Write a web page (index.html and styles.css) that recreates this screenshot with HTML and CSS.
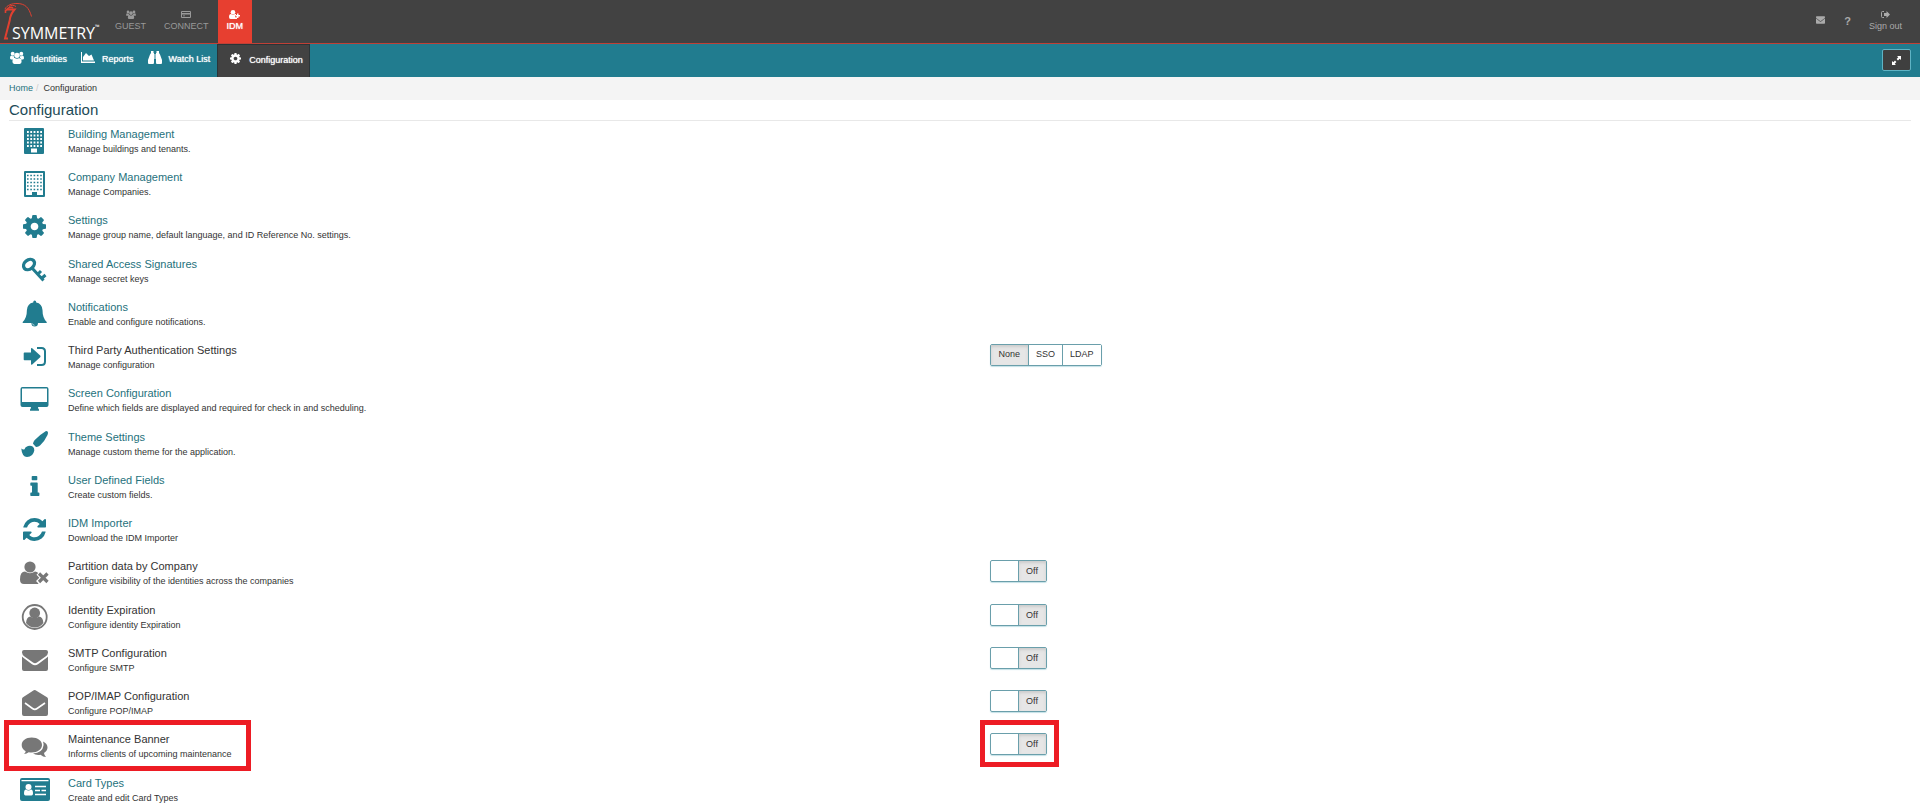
FILE: index.html
```html
<!DOCTYPE html>
<html lang="en">
<head>
  <meta charset="UTF-8">
  <meta name="viewport" content="width=device-width, initial-scale=1.0">
  <title>Configuration</title>
  <link rel="stylesheet" href="styles.css">
</head>
<body>
  <svg class="sprite" aria-hidden="true">
    <symbol id="cog" viewBox="128 128 1536 1536">
      <path d="M1152 896q0-106-75-181t-181-75-181 75-75 181 75 181 181 75 181-75 75-181zm512-109v222q0 12-8 23t-20 13l-185 28q-19 54-39 91 35 50 107 138 10 12 10 25t-9 23q-27 37-99 108t-94 71q-12 0-26-9l-138-108q-44 23-91 38-16 136-29 186-7 28-36 28h-222q-14 0-24.500-8.500t-11.500-21.500l-28-184q-49-16-90-37l-141 107q-10 9-25 9-14 0-25-11-126-114-165-168-7-10-7-23 0-12 8-23 15-21 51-66.500t54-70.500q-27-50-41-99l-183-27q-13-2-21-12.500t-8-23.500v-222q0-12 8-23t19-13l186-28q14-46 39-92-40-57-107-138-10-12-10-24 0-10 9-23 26-36 98.500-107.500t94.500-71.500q13 0 26 10l138 107q44-23 91-38 16-136 29-186 7-28 36-28h222q14 0 24.500 8.500t11.500 21.500l28 184q49 16 90 37l142-107q9-9 24-9 13 0 25 10 129 119 165 170 7 8 7 22 0 12-8 23-15 21-51 66.500t-54 70.500q26 50 41 98l183 28q13 2 21 12.500t8 23.500z"/>
    </symbol>
    <symbol id="users" viewBox="0 0 26 24">
      <circle cx="5" cy="5" r="3.600"/><circle cx="21" cy="5" r="3.600"/><circle cx="13" cy="8" r="5"/>
      <path d="M0 13q0-4 2.500-4.500 2 1.500 4.500.8 0 3 2 5Q6 14 4.500 15.500H2Q0 15.500 0 13zM26 13q0-4-2.500-4.500-2 1.500-4.500.8 0 3-2 5 3-.3 4.500 1.200H24q2 0 2-2.500zM4.500 20q0-6.500 4-7 4.500 3 9 0 4 .5 4 7 0 4-3.500 4H8q-3.500 0-3.500-4z"/>
    </symbol>
    <symbol id="mail" viewBox="0 0 26 21">
      <path d="M2 0h22q2 0 2 2v.500q0 2-2.500 4L15 12.500q-2 1.400-4 0L2.500 6.500Q0 4.500 0 2.500V2Q0 0 2 0zM0 6.500q1 1.200 10 7.700 3 2 6 0 9-6.500 10-7.700V19q0 2-2 2H2q-2 0-2-2z"/>
    </symbol>
  </svg>

  <header class="topbar">
    <a class="logo" href="#" aria-label="Symmetry">
      <svg class="logo-bird" viewBox="0 0 30 42" fill="none" stroke="#e04030">
        <path stroke-width="1" d="M2 9C4 5 9 3.500 14 3.500c8 0 12 4 14.500 13M6 6.500c2-1.500 5-1.500 7 0"/>
        <path stroke-width="1.600" d="M3 10.500c2-3 5-4 7-2.500M2.500 9.500V13"/>
        <path stroke-width="2" d="M4 9.500h7.500Q7 15 6.800 20L2 38.500h3"/>
      </svg>
      <span class="logo-name">SYMMETRY<sup>™</sup></span>
    </a>
    <nav class="modules">
      <a href="#"><svg width="10" height="9"><use href="#users"/></svg>GUEST</a>
      <a href="#"><svg width="10" height="9" viewBox="0 0 10 9"><path fill-rule="evenodd" d="M1 1h8q1 0 1 1v5q0 1-1 1H1Q0 8 0 7V2q0-1 1-1zm0 3.500V7h8V4.500zM1 2v1h8V2zM2 5.500h2v.800H2z"/></svg>CONNECT</a>
      <a class="active" href="#"><svg width="11" height="9" viewBox="0 0 11 9"><circle cx="4" cy="2.300" r="2.300"/><path d="M0 7q0-3 2-3 2 1.500 4 0h1v1.200H6v2h2V9H1.500Q0 9 0 7zM8 3.500h1.500V5H11v1.500H9.500V8H8V6.500H6.500V5H8z"/></svg>IDM</a>
    </nav>
    <div class="tools">
      <a href="#" aria-label="Messages"><svg width="9" height="8"><use href="#mail"/></svg></a>
      <a class="help" href="#">?</a>
      <a class="signout" href="#"><svg width="9" height="9" viewBox="0 0 9 9"><path d="M3 1.500H1.500Q.500 1.500.500 2.500v4q0 1 1 1H3" fill="none" stroke="currentColor"/><path d="M5.500 1L9 4.500 5.500 8V6H3V3h2.500z"/></svg>Sign out</a>
    </div>
  </header>

  <div class="menubar">
    <nav class="menu">
      <a href="#"><svg width="14" height="13"><use href="#users"/></svg>Identities</a>
      <a href="#"><svg width="14" height="12" viewBox="0 0 14 12"><path d="M0 1h1v9.500h13V12H0zM2 9.500V6l3-4 3 3 2.500-1.500L13 9.500z"/></svg>Reports</a>
      <a href="#"><svg width="14" height="13" viewBox="0 0 14 13"><path d="M3 0h2.500v2H6v9.500Q6 13 5 13H1q-1 0-1-1V9l2-5.500L3 2zM11 0H8.500v2H8v9.500Q8 13 9 13h4q1 0 1-1V9l-2-5.500L11 2zM6.500 3h1v5h-1z"/></svg>Watch List</a>
      <a class="active" href="#"><svg width="11" height="11"><use href="#cog"/></svg>Configuration</a>
    </nav>
    <button class="expand" type="button" aria-label="Full screen"><svg width="9" height="9" viewBox="0 0 9 9"><path d="M5 0h4v4L7.700 2.700 6 4.400 4.600 3l1.700-1.700zM4 9H0V5l1.300 1.300L3 4.600 4.400 6 2.700 7.700z"/></svg></button>
  </div>

  <div class="breadcrumb">
    <a href="#">Home</a><span class="slash">/</span><span>Configuration</span>
  </div>

  <main>
    <h1>Configuration</h1>

    <div class="config-list">
      <section class="item">
        <svg class="icon" viewBox="0 0 32 30">
          <path fill-rule="evenodd" d="M6 2h18q1 0 1 1v24q0 1-1 1H6q-1 0-1-1V3q0-1 1-1zm6 20.500v4h6v-4z"/>
          <path stroke="#fff" stroke-width="1.800" stroke-dasharray="1.800 1.500" d="M8 6h15M8 9.500h15M8 13h15M8 16.500h15M8 20h15"/>
        </svg>
        <div><a class="title" href="#">Building Management</a><p>Manage buildings and tenants.</p></div>
      </section>
      <section class="item">
        <svg class="icon" viewBox="0 0 32 30">
          <path fill-rule="evenodd" d="M6 2h19q1 0 1 1v24q0 1-1 1H6q-1 0-1-1V3q0-1 1-1zm1 2v22h6v-3h5v3h6V4z"/>
          <path stroke="currentColor" stroke-width="1.500" stroke-dasharray="1.600 1.700" d="M8 6.500h15M8 10h15M8 13.500h15M8 17h15M8 20.500h15"/>
        </svg>
        <div><a class="title" href="#">Company Management</a><p>Manage Companies.</p></div>
      </section>
      <section class="item">
        <svg class="icon" viewBox="0 0 32 30"><use href="#cog" x="4" y="3" width="23" height="23"/></svg>
        <div><a class="title" href="#">Settings</a><p>Manage group name, default language, and ID Reference No. settings.</p></div>
      </section>
      <section class="item">
        <svg class="icon" viewBox="0 0 32 30" fill="none" stroke="currentColor">
          <ellipse cx="10" cy="8.500" rx="6" ry="4.500" stroke-width="3.400" transform="rotate(-40 10 8.500)"/>
          <path stroke-width="3" d="M13 12l11.500 12.500M18.500 18.500l3.500-3.500M22.500 22.500l4-3.500"/>
        </svg>
        <div><a class="title" href="#">Shared Access Signatures</a><p>Manage secret keys</p></div>
      </section>
      <section class="item">
        <svg class="icon" viewBox="0 0 32 30">
          <path d="M15.700 1.500q1.500 0 1.500 2Q23 4.500 23.500 11q0 8 4.200 12v1H19q0 3.500-3.300 3.500T12.400 24H3.700v-1q4.200-4 4.200-12 .500-6.500 6.300-7.500 0-2 1.500-2z"/>
          <path d="M13.500 24.500q.300 1.800 2 1.800" fill="none" stroke="#fff" stroke-width=".600"/>
        </svg>
        <div><a class="title" href="#">Notifications</a><p>Enable and configure notifications.</p></div>
      </section>
      <section class="item">
        <svg class="icon" viewBox="0 0 32 30">
          <path d="M5.500 10.500H12V7q0-1.500 1.200-.700l8 7.200q.800.900 0 1.700l-8 7.200q-1.200.700-1.200-.700v-3.500H5.500q-.800 0-.800-.800V11.300q0-.8.800-.8z"/>
          <path d="M18 6h4.500q3.500 0 3.500 3.500v10q0 3.500-3.500 3.500H18" fill="none" stroke="currentColor" stroke-width="2"/>
        </svg>
        <div><span class="title">Third Party Authentication Settings</span><p>Manage configuration</p></div>
        <div class="btn-group" role="group" aria-label="Third party authentication">
          <button class="selected" type="button">None</button>
          <button type="button">SSO</button>
          <button type="button">LDAP</button>
        </div>
      </section>
      <section class="item">
        <svg class="icon" viewBox="0 0 32 30">
          <path fill-rule="evenodd" d="M3.500 2h24q2 0 2 2v16q0 2-2 2H19q0 1.500 1 2.500v1.200h-9v-1.200q1-1 1-2.500H3.500q-2 0-2-2V4q0-2 2-2zM3 3.500v13.500h25V3.500z"/>
        </svg>
        <div><a class="title" href="#">Screen Configuration</a><p>Define which fields are displayed and required for check in and scheduling.</p></div>
      </section>
      <section class="item">
        <svg class="icon" viewBox="0 0 32 30">
          <path d="M27 2q3 0 1.500 4-3 6.500-7.500 10.500-2 1.700-4.300 1.300-1.700-1.800-2.700-3 .2-2 1.500-3.500Q21 5.500 27 2zM9 17q2.500-1 5 .7 1.500 1.500 1.300 3.800Q14 28 8 28q-5 0-5.700-8.500Q4 21 5.500 20.300 6 18 9 17z"/>
        </svg>
        <div><a class="title" href="#">Theme Settings</a><p>Manage custom theme for the application.</p></div>
      </section>
      <section class="item">
        <svg class="icon" viewBox="0 0 32 30">
          <path d="M13.500 4h4q.800 0 .800.800v2.700q0 .800-.800.800h-4q-.800 0-.800-.800V4.800q0-.8.800-.8zM12 10.500h6q.700 0 .700.700v9.300h1q.700 0 .700.700v2q0 .800-.700.800H12q-.700 0-.700-.800v-2q0-.7.700-.7h1v-6.800h-1q-.700 0-.700-.7v-1.800q0-.7.700-.7z"/>
        </svg>
        <div><a class="title" href="#">User Defined Fields</a><p>Create custom fields.</p></div>
      </section>
      <section class="item">
        <svg class="icon" viewBox="0 0 32 30">
          <svg x="4" y="3" width="23" height="23" viewBox="128 128 1536 1536"><path d="M1639 1056q0 5-1 7-64 268-268 434.500t-478 166.500q-146 0-282.500-55t-243.500-157l-129 129q-19 19-45 19t-45-19-19-45v-448q0-26 19-45t45-19h448q26 0 45 19t19 45-19 45l-137 137q71 66 161 102t187 36q134 0 250-65t186-179q11-17 53-117 8-23 30-23h192q13 0 22.500 9.500t9.500 22.500zm25-800v448q0 26-19 45t-45 19h-448q-26 0-45-19t-19-45 19-45l138-138q-148-137-349-137-134 0-250 65t-186 179q-11 17-53 117-8 23-30 23h-199q-13 0-22.500-9.500t-9.500-22.500v-7q65-268 270-434.500t480-166.500q146 0 284 55.500t245 156.500l130-129q19-19 45-19t45 19 19 45z"/></svg>
        </svg>
        <div><a class="title" href="#">IDM Importer</a><p>Download the IDM Importer</p></div>
      </section>
      <section class="item off">
        <svg class="icon" viewBox="0 0 32 30">
          <circle cx="11" cy="9" r="5.600"/>
          <path d="M1 21.500q0-8 5-8 5 3.500 10 0 2 0 3.200 1.500l-1.700 1.800 2.800 2.900-3.300 3.300 2.500 2.500-.5.500H5q-4 0-4-4.500z"/>
          <path d="M20 15.500l8.500 8.500M28.500 15.500L20 24" stroke="currentColor" stroke-width="3.200"/>
        </svg>
        <div><span class="title">Partition data by Company</span><p>Configure visibility of the identities across the companies</p></div>
        <label class="switch"><input type="checkbox" aria-label="Partition data by Company"><span class="knob"></span><span class="state">Off</span></label>
      </section>
      <section class="item off">
        <svg class="icon" viewBox="0 0 32 30">
          <circle cx="15.700" cy="15" r="12" fill="none" stroke="currentColor" stroke-width="1.800"/>
          <circle cx="15.700" cy="11" r="5.400"/>
          <path d="M7 21q.500-6.500 4.500-6.500 4.200 3 8.400 0 4 0 4.500 6.500-3.500 4.500-8.700 4.500T7 21z"/>
        </svg>
        <div><span class="title">Identity Expiration</span><p>Configure identity Expiration</p></div>
        <label class="switch"><input type="checkbox" aria-label="Identity Expiration"><span class="knob"></span><span class="state">Off</span></label>
      </section>
      <section class="item off">
        <svg class="icon" viewBox="0 0 32 30"><use href="#mail" x="3" y="5" width="26" height="21"/></svg>
        <div><span class="title">SMTP Configuration</span><p>Configure SMTP</p></div>
        <label class="switch"><input type="checkbox" aria-label="SMTP Configuration"><span class="knob"></span><span class="state">Off</span></label>
      </section>
      <section class="item off">
        <svg class="icon" viewBox="0 0 32 30">
          <path d="M3 11q0-1 1-1.800L14 2.700q1.700-1.300 3.400 0L28 9.200q1 .8 1 1.800v15q0 2-2 2H5q-2 0-2-2z"/>
          <path d="M6 15l7.500 5.500q2.300 1.700 4.600 0L26 15" fill="none" stroke="#fff" stroke-width="1.600"/>
        </svg>
        <div><span class="title">POP/IMAP Configuration</span><p>Configure POP/IMAP</p></div>
        <label class="switch"><input type="checkbox" aria-label="POP/IMAP Configuration"><span class="knob"></span><span class="state">Off</span></label>
      </section>
      <section class="item off marked">
        <svg class="icon" viewBox="0 0 32 30">
          <path d="M12.700 6.500c6 0 10.300 3.300 10.300 7.500s-4.300 7.500-10.300 7.500q-1.500 0-3-.300-2 1.600-4.700 1.800 1.500-1.300 1.700-2.800Q2.700 18 2.700 14c0-4.200 4-7.500 10-7.500z"/>
          <path d="M24 10.500q4.500 2.200 4.500 6 0 3.200-3.500 5.500.300 2.500 2 4-3 0-5.500-2.300-4.500.700-7.500-1.200 9.500-.5 10.500-8 .2-2-.5-4z"/>
        </svg>
        <div><span class="title">Maintenance Banner</span><p>Informs clients of upcoming maintenance</p></div>
        <label class="switch"><input type="checkbox" aria-label="Maintenance Banner"><span class="knob"></span><span class="state">Off</span></label>
      </section>
      <section class="item">
        <svg class="icon" viewBox="0 0 32 30">
          <path fill-rule="evenodd" d="M3 3h26q2 0 2 2v19q0 2-2 2H3q-2 0-2-2V5q0-2 2-2zM2.500 5v1.200h27V5z"/>
          <circle cx="9.500" cy="12" r="3" fill="#fff"/>
          <path fill="#fff" d="M5 18.500q0-4 2-4 2.500 1.800 5 0 2 0 2 4 0 2-1.500 2h-6q-1.500 0-1.500-2z"/>
          <path stroke="#fff" stroke-width="1.700" d="M16 11.500h11M16 15.500h5M22.500 15.500H27M16 19.500h11"/>
        </svg>
        <div><a class="title" href="#">Card Types</a><p>Create and edit Card Types</p></div>
      </section>
    </div>
  </main>
</body>
</html>
```
FILE: styles.css
```css
*,
*::before {
  box-sizing: border-box;
}
body {
  margin: 0;
  background: #fff;
  color: #333;
  font-family: "Liberation Sans", Arial, sans-serif;
  font-size: 9px;
  line-height: 14px;
}
a {
  color: #25717c;
  text-decoration: none;
}
button {
  font: inherit;
  color: inherit;
  cursor: pointer;
}
svg {
  fill: currentColor;
}
svg[fill="none"] {
  fill: none;
}
.sprite {
  display: none;
}

/* top bar */
.topbar {
  display: flex;
  height: 44px;
  background: #424242;
  border-bottom: 1px solid #c04036;
}
.logo {
  position: relative;
  width: 106px;
  padding: 21px 0 0 12px;
  color: #fff;
}
.logo-bird {
  position: absolute;
  left: 3px;
  top: 0;
  width: 30px;
  height: 42px;
}
.logo-name {
  display: flex;
  font-family: "Open Sans", sans-serif;
  font-size: 16px;
  line-height: 24px;
}
.logo-name sup {
  font-size: 6px;
  line-height: 12px;
}
.modules {
  display: flex;
}
.modules a,
.signout {
  display: flex;
  flex-direction: column;
  align-items: center;
  padding: 10px 9px 0;
  color: #999;
}
.modules .active {
  background: #e73f30;
  color: #fff;
  text-shadow: 0 0 1px #fff;
}
.tools {
  display: flex;
  align-items: flex-start;
  margin-left: auto;
  padding-right: 9px;
}
.tools a {
  color: #aaa;
}
.tools > a:first-child {
  padding: 14px 10px 0;
}
.tools .help {
  padding: 14px 9px 0;
  font-size: 11px;
  font-weight: bold;
}

/* menu */
.menubar {
  display: flex;
  justify-content: space-between;
  height: 33px;
  padding-right: 9px;
  background: #217c8f;
}
.menu {
  display: flex;
  padding-left: 3px;
}
.menu a {
  display: flex;
  align-items: center;
  gap: 7px;
  padding: 0 7px 4px;
  color: #fff;
  text-shadow: 0 0 1px #fff;
}
.menu a svg {
  margin-bottom: 3px;
}
.menu .active {
  padding: 0 6px 2px 12px;
  gap: 8px;
  background: #424242;
  border: 1px solid #2b3437;
  border-bottom: 0;
}
.expand {
  display: flex;
  align-items: center;
  justify-content: center;
  width: 29px;
  height: 22px;
  margin-top: 5px;
  padding: 0;
  background: #3f3f3f;
  border: 1px solid #5fb3c4;
  border-radius: 2px;
  color: #fff;
}

.breadcrumb {
  height: 23px;
  padding: 4px 9px;
  background: #f4f4f4;
}
.slash {
  padding: 0 5px 0 3px;
  color: #ccc;
}

/* content */
main {
  padding: 0 9px;
}
h1 {
  margin: 0 0 5px;
  border-bottom: 1px solid #e8e8e8;
  color: #1d4b57;
  font-size: 15px;
  font-weight: normal;
  line-height: 20px;
}
.item {
  position: relative;
  display: grid;
  grid-template-columns: 49px 1fr 1fr;
  height: 30px;
  margin: 0 0 13px 10px;
}
.item:nth-child(4n + 3) {
  margin-bottom: 14px;
}
.item:last-child {
  margin-bottom: 0;
}
.icon {
  width: 32px;
  height: 30px;
  color: #217c8f;
}
.off .icon {
  color: #777;
}
.title {
  display: block;
  font-size: 11px;
  line-height: 16px;
}
.item p {
  margin: 0;
}

/* switches */
.btn-group,
.switch {
  position: relative;
  display: flex;
  justify-self: start;
  height: 22px;
  margin-top: 2px;
  border: 1px solid #6a9fab;
  border-radius: 2px;
  box-shadow: 0 1px 1px #c4e0e6;
}
.btn-group button {
  padding: 0 7px 2px;
  background: #fff;
  border: 0;
}
.btn-group button + button {
  border-left: 1px solid #6a9fab;
}
.btn-group .selected {
  padding: 0 8px 2px;
  background: #e6e6e6;
  box-shadow: inset 0 2px 3px #ccc;
}
.switch {
  width: 57px;
  cursor: pointer;
}
.switch input {
  position: absolute;
  inset: 0;
  margin: 0;
  opacity: 0;
}
.knob,
.state {
  flex: 1;
}
.state {
  padding-top: 3px;
  background: #e6e6e6;
  border-left: 1px solid #6a9fab;
  box-shadow: inset 0 2px 3px #ccc;
  text-align: center;
}

/* red frames over the maintenance row */
.marked::before,
.marked .switch::before {
  content: "";
  position: absolute;
  border: 5px solid #ed1c24;
  pointer-events: none;
}
.marked::before {
  left: -15px;
  top: -11px;
  width: 247px;
  height: 51px;
}
.marked .switch::before {
  left: -11px;
  top: -14px;
  width: 79px;
  height: 47px;
}
```
